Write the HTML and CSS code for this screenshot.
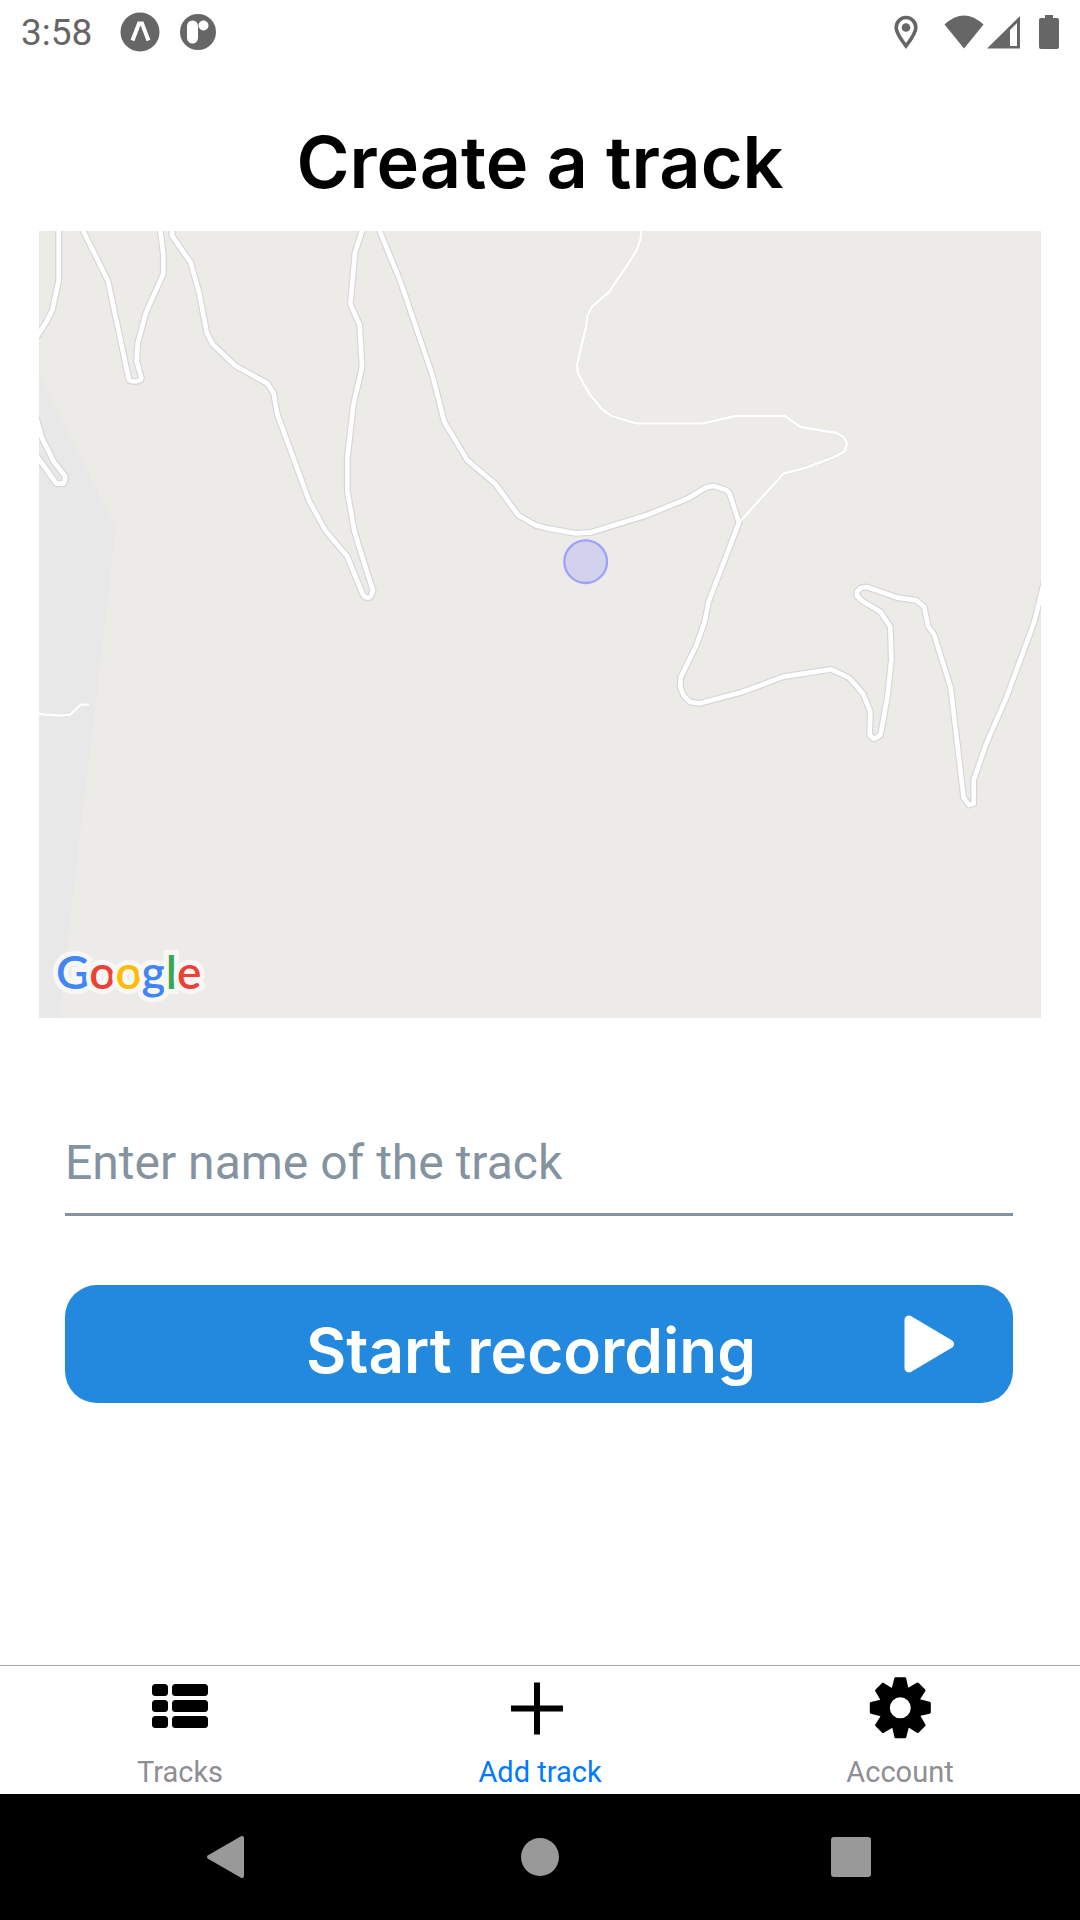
FILE: index.html
```html
<!DOCTYPE html>
<html lang="en">
<head>
<meta charset="utf-8">
<meta name="viewport" content="width=device-width, initial-scale=1">
<title>Create a track</title>
<link rel="stylesheet" href="styles.css">
</head>
<body>
<header class="status">
  <div class="status-group status-left">
    <span class="clock">3:58</span>
    <svg width="40" height="40" viewBox="0 0 40 40" aria-hidden="true"><circle cx="20" cy="20" r="19.5" fill="#666"/><path d="M12.5 28.5 19 11.5h3L28.500 28.500" fill="none" stroke="#fff" stroke-width="4"/></svg>
    <svg width="36" height="36" viewBox="0 0 36 36" aria-hidden="true"><circle cx="18" cy="18" r="18" fill="#666"/><rect x="7" y="6.500" width="11" height="23" rx="5.500" fill="#fff"/><circle cx="23.500" cy="11.500" r="5" fill="#fff"/></svg>
  </div>
  <div class="status-group status-right">
    <svg class="pin" width="24" height="34" viewBox="0 0 24 34" aria-hidden="true"><path d="M12 2.500C6.500 2.500 2.200 7 2.200 12.500c0 6 5 12 9.800 18.500 4.800-6.500 9.800-12.500 9.800-18.500C21.800 7 17.500 2.500 12 2.500Z" fill="none" stroke="#666" stroke-width="3.600"/><circle cx="12" cy="12.500" r="4.300" fill="#666"/></svg>
    <svg width="40" height="34" viewBox="0 0 40 34" aria-hidden="true"><path d="M.5 9.500Q20-8.500 39.500 9.500L20 33.500Z" fill="#666"/></svg>
    <svg class="signal" width="34" height="34" viewBox="0 0 34 34" aria-hidden="true"><path fill-rule="evenodd" d="M0 33.500 33 1v32.500ZM23 15v16h7V8Z" fill="#666"/></svg>
    <svg width="20" height="34" viewBox="0 0 20 34" aria-hidden="true"><path d="M6 0h8v3h4q2 0 2 2v27q0 2-2 2H2q-2 0-2-2V5q0-2 2-2h4Z" fill="#666"/></svg>
  </div>
</header>

<main class="screen">
  <h1 class="title">Create a track</h1>

  <div class="map">
    <svg class="map-canvas" viewBox="0 0 3006 2361" preserveAspectRatio="xMidYMid slice" role="img" aria-label="Map">
      <path class="water" d="M0 435 231 891 59 2361H0Z"/>
      <defs>
        <g id="roads">
          <path d="M59-10V149L40 237 18 280-8 320"/>
          <path d="M128-10 207 150 270 447Q288 456 304 447L307 440 293 390 296 337 321 245 373 128V70L363-10"/>
          <path d="M399-10V14L455 95 481 188 504 308 522 341 590 405 685 457 704 487 715 550 810 809 860 900 924 975 973 1093Q984 1105 995 1097L1002 1078 978 1004 946 900 925 780V680L943 523 969 409 962 281 934 220 948 65 972-10"/>
          <path d="M1018-10 1083 148 1181 435 1216 573 1285 688 1370 760 1438 853 1490 883 1530 893 1610 907 1657 904 1822 853 1945 803 2002 769 2023 765 2062 777 2072 788 2100 875 2009 1112 1997 1172 1972 1243 1926 1337 1923 1366 1934 1394 1953 1413 1983 1417 2110 1383 2233 1337 2377 1315 2431 1341 2472 1388 2494 1442 2492 1512 2503 1523 2513 1520 2525 1510 2546 1392 2557 1287 2554 1188 2524 1142 2470 1110 2454 1095V1082L2465 1071 2484 1068 2575 1100 2632 1108 2656 1129 2667 1185 2685 1210 2735 1370 2774 1700 2790 1722 2804 1718V1647L2842 1537 2902 1400 2986 1172 3016 1050"/>
          <path d="M-8 560 8 619 45 693 78 735V748L74 758H52L-8 673"/>
        </g>
        <g id="trails">
          <path d="M1806-10V18L1795 53 1773 90 1710 183 1658 228 1645 255 1641 287 1614 402 1617 427 1650 487 1689 535 1718 555 1791 577H1992L2090 555H2237L2285 588 2392 606 2414 618 2424 637 2418 660 2386 678 2302 710 2233 728 2100 875"/>
          <path d="M-5 1446 11 1450 61 1454 94 1451 126 1421H150"/>
        </g>
      </defs>
      <use href="#trails" class="trail-edge"/>
      <use href="#roads" class="road-edge"/>
      <use href="#trails" class="trail"/>
      <use href="#roads" class="road"/>
      <circle class="position" cx="1640" cy="992" r="64"/>
    </svg>
    <span class="google"><span class="blue">G</span><span class="red">o</span><span class="yellow">o</span><span class="blue">g</span><span class="green">l</span><span class="red">e</span></span>
  </div>

  <form class="form">
    <input class="name" type="text" aria-label="Track name" placeholder="Enter name of the track">
    <button class="start" type="button">
      <span class="start-label">Start recording</span>
      <svg class="play" width="50" height="58" viewBox="0 0 50 58" aria-hidden="true"><path d="M5 5 45.500 29 5 53Z" fill="#fff" stroke="#fff" stroke-width="9" stroke-linejoin="round"/></svg>
    </button>
  </form>
</main>

<nav class="tabs">
  <a class="tab" href="#tracks">
    <svg width="62" height="62" viewBox="0 0 62 62" aria-hidden="true"><rect x="3" y="7" width="16" height="12" rx="3.500"/><rect x="23" y="7" width="36" height="12" rx="3.500"/><rect x="3" y="23" width="16" height="12" rx="3.500"/><rect x="23" y="23" width="36" height="12" rx="3.500"/><rect x="3" y="39" width="16" height="12" rx="3.500"/><rect x="23" y="39" width="36" height="12" rx="3.500"/></svg>
    <span>Tracks</span>
  </a>
  <a class="tab active" href="#add" aria-current="page">
    <svg width="62" height="62" viewBox="0 0 62 62" aria-hidden="true"><path d="M28 5.500V57.500M2 31.500H54" fill="none" stroke="#000" stroke-width="6"/></svg>
    <span>Add track</span>
  </a>
  <a class="tab" href="#account">
    <svg width="62" height="62" viewBox="0 0 62 62" aria-hidden="true">
      <defs><path id="tooth" d="M22 14 25.300 1.500Q25.500.3 26.500.3H36Q37 .3 37.200 1.500L40 14Z"/></defs>
      <circle cx="31.300" cy="30.800" r="16" fill="none" stroke="#000" stroke-width="11"/>
      <use href="#tooth"/><use href="#tooth" transform="rotate(45 31.300 30.800)"/><use href="#tooth" transform="rotate(90 31.300 30.800)"/><use href="#tooth" transform="rotate(135 31.300 30.800)"/><use href="#tooth" transform="rotate(180 31.300 30.800)"/><use href="#tooth" transform="rotate(225 31.300 30.800)"/><use href="#tooth" transform="rotate(270 31.300 30.800)"/><use href="#tooth" transform="rotate(315 31.300 30.800)"/>
    </svg>
    <span>Account</span>
  </a>
</nav>

<footer class="system">
  <button class="key" type="button" aria-label="Back"><svg width="48" height="48" viewBox="0 0 48 48" aria-hidden="true"><path d="M37 5V43L4 24Z" stroke="#999" stroke-width="4" stroke-linejoin="round"/></svg></button>
  <button class="key" type="button" aria-label="Home"><svg width="48" height="48" viewBox="0 0 48 48" aria-hidden="true"><circle cx="24" cy="24" r="19"/></svg></button>
  <button class="key" type="button" aria-label="Recent apps"><svg width="48" height="48" viewBox="0 0 48 48" aria-hidden="true"><rect x="4" y="4" width="40" height="40" rx="3"/></svg></button>
</footer>
</body>
</html>
```

FILE: styles.css
```css
* {
  box-sizing: border-box;
}

body {
  display: flex;
  flex-direction: column;
  min-height: 100vh;
  margin: 0;
  background: #fff;
  color: #000;
  font-family: Roboto, "Liberation Sans", sans-serif;
}

svg {
  display: block;
  flex: none;
}

button {
  padding: 0;
  border: 0;
  font: inherit;
  cursor: pointer;
}

.status {
  display: flex;
  justify-content: space-between;
  align-items: center;
  height: 64px;
  padding: 0 21px;
}

.status-group {
  display: flex;
  align-items: center;
}

.status-left {
  gap: 20px;
}

.clock {
  margin-right: 8px;
  padding-top: 2px;
  color: #666;
  font-size: 37px;
  line-height: 40px;
}

.pin {
  margin-right: 26px;
}

.signal {
  margin: 0 18px 0 3px;
}

.screen {
  flex: 1;
  padding: 0 39px;
}

.title {
  margin: 0;
  padding: 52px 0 23px;
  font-family: Inter, "Open Sans", sans-serif;
  font-size: 72px;
  font-weight: 600;
  line-height: 92px;
  text-align: center;
}

.map {
  position: relative;
  background: #ecebe7;
}

.map-canvas {
  width: 100%;
  height: auto;
}

.water {
  fill: #e8e8e8;
}

.road,
.road-edge,
.trail,
.trail-edge {
  fill: none;
  stroke: #fff;
  stroke-linejoin: round;
}

.road {
  stroke-width: 14px;
}

.road-edge {
  stroke: #d6d6da;
  stroke-width: 21px;
}

.trail {
  stroke-width: 7px;
}

.trail-edge {
  stroke: #e4e4e5;
  stroke-width: 10px;
}

.position {
  fill: #d3d2ec;
  stroke: #a0a0fc;
  stroke-width: 7px;
}

.google {
  position: absolute;
  left: 17px;
  bottom: 16px;
  font-family: Lato, sans-serif;
  font-size: 46px;
  font-weight: 600;
  line-height: 60px;
  paint-order: stroke fill;
  -webkit-text-stroke: 10px #f8f7f6;
}

.blue {
  color: #4285f4;
}

.red {
  color: #ea4335;
}

.yellow {
  color: #fbbc05;
}

.green {
  color: #34a853;
}

.form {
  display: flex;
  flex-direction: column;
  gap: 69px;
  padding: 104px 28px 0 26px;
}

.name {
  width: 100%;
  height: 94px;
  padding: 0 0 10px;
  border: 0;
  border-bottom: 3px solid #8592a0;
  border-radius: 0;
  outline: 0;
  background: none;
  font-family: inherit;
  font-size: 48px;
}

.name::placeholder {
  color: #8592a0;
  opacity: 1;
}

.start {
  display: grid;
  grid-template-columns: 1fr auto 1fr;
  align-items: center;
  height: 118px;
  padding: 0 59px 0 43px;
  border-radius: 32px;
  background: #2389df;
  color: #fff;
}

.start-label {
  grid-column: 2;
  padding-top: 14px;
  font-family: Inter, "Open Sans", sans-serif;
  font-size: 62px;
  font-weight: 600;
  line-height: 72px;
}

.play {
  justify-self: end;
}

.tabs {
  display: grid;
  grid-template-columns: repeat(3, 1fr);
  height: 129px;
  border-top: 1px solid #a7a7aa;
}

.tab {
  display: flex;
  flex-direction: column;
  align-items: center;
  gap: 15px;
  padding-top: 11px;
  color: #8e8e93;
  font-size: 29px;
  line-height: 36px;
  text-decoration: none;
}

.active {
  color: #007aff;
}

.system {
  display: grid;
  grid-template-columns: repeat(3, minmax(0, 311px));
  justify-content: center;
  height: 126px;
  background: #000;
}

.key {
  display: flex;
  justify-content: center;
  align-items: center;
  background: none;
  fill: #999;
}
```
